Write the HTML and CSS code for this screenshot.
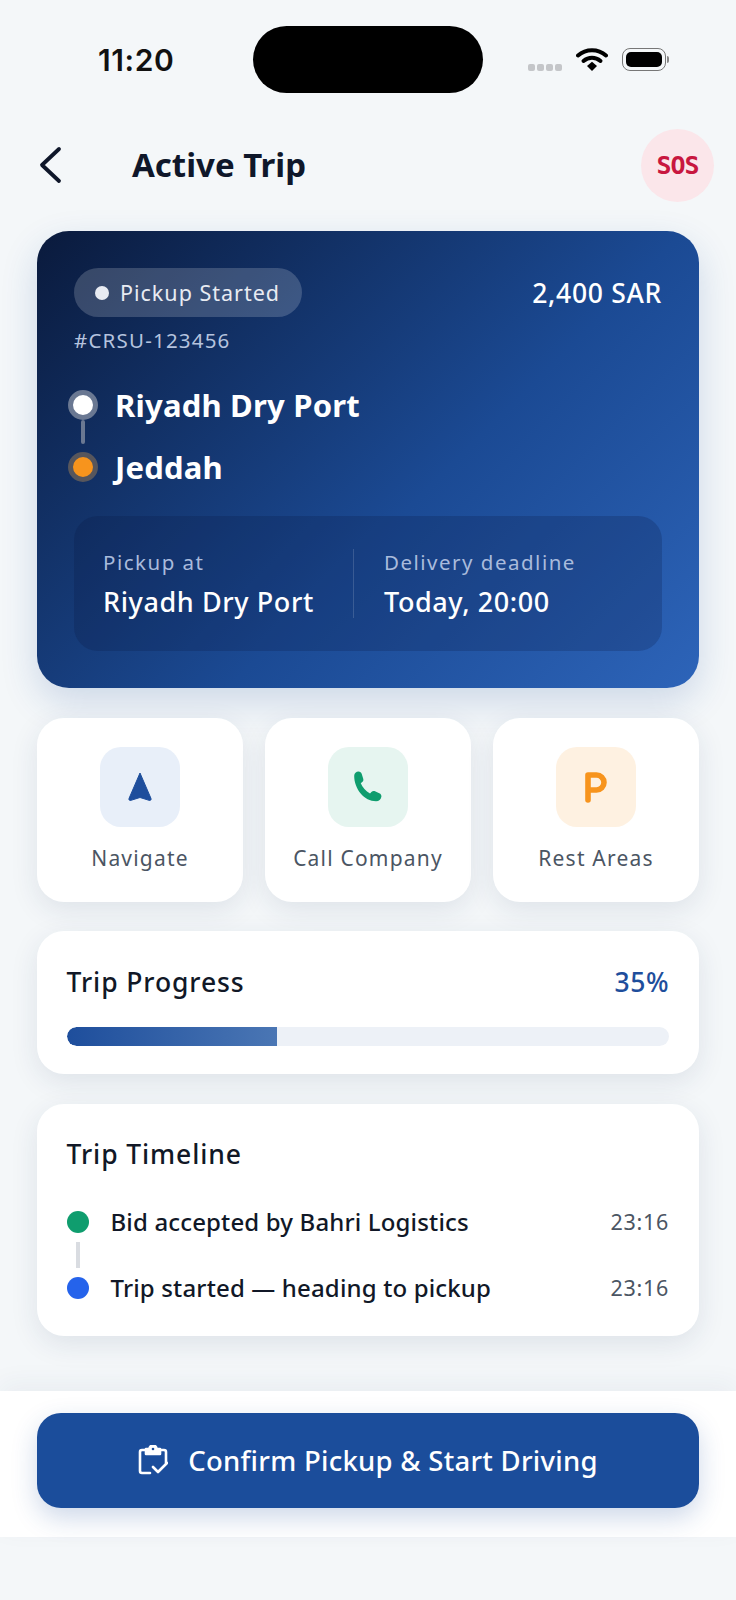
FILE: index.html
```html
<!DOCTYPE html>
<html lang="en">
<head>
    <meta charset="UTF-8">
    <meta name="viewport" content="width=device-width, initial-scale=1.0">
    <title>Active Trip</title>
    <link rel="stylesheet" href="styles.css">
</head>
<body>
    <div class="status-bar">
        <span class="clock">11:20</span>
        <div class="island"></div>
        <div class="status-icons">
            <div class="signal"><i></i><i></i><i></i><i></i></div>
            <svg class="wifi" width="32" height="24" viewBox="0 0 32 24">
                <path d="M2 8.500C10 1.500 22 1.500 30 8.500" fill="none" stroke="#000" stroke-width="4" stroke-linecap="round"/>
                <path d="M7.500 14C12.500 9.800 19.500 9.800 24.500 14" fill="none" stroke="#000" stroke-width="4" stroke-linecap="round"/>
                <path d="M11 19l5-4.200 5 4.200-5 5z" fill="#000"/>
            </svg>
            <div class="battery"><div class="battery-fill"></div></div>
            <div class="battery-cap"></div>
        </div>
    </div>

    <div class="header">
        <svg class="back" width="24" height="38" viewBox="0 0 24 38">
            <path d="M21 3L4 19 21 35" fill="none" stroke="#0f172a" stroke-width="3.800" stroke-linecap="round" stroke-linejoin="round"/>
        </svg>
        <h1>Active Trip</h1>
        <div class="sos">SOS</div>
    </div>

    <div class="content">
        <div class="trip-card">
            <div class="trip-top">
                <div class="pill"><span class="pill-dot"></span>Pickup Started</div>
                <div class="price">2,400 SAR</div>
            </div>
            <div class="trip-id">#CRSU-123456</div>
            <div class="route">
                <div class="route-row">
                    <span class="stop stop-from"></span>
                    <span class="route-name">Riyadh Dry Port</span>
                </div>
                <div class="route-line"></div>
                <div class="route-row">
                    <span class="stop stop-to"></span>
                    <span class="route-name">Jeddah</span>
                </div>
            </div>
            <div class="trip-info">
                <div class="info-col">
                    <div class="info-label">Pickup at</div>
                    <div class="info-value">Riyadh Dry Port</div>
                </div>
                <div class="info-col info-col-right">
                    <div class="info-label">Delivery deadline</div>
                    <div class="info-value">Today, 20:00</div>
                </div>
            </div>
        </div>

        <div class="actions">
            <div class="action">
                <div class="action-icon icon-blue">
                    <svg width="26" height="32" viewBox="0 0 26 32">
                        <path d="M13 2L24 27.500c.5 1.400-.7 2.300-2 1.800L13 26.500 4 29.300c-1.300.5-2.500-.4-2-1.800z" fill="#1e4e9c" stroke="#1e4e9c" stroke-width="1" stroke-linejoin="round"/>
                    </svg>
                </div>
                <div class="action-label">Navigate</div>
            </div>
            <div class="action">
                <div class="action-icon icon-green">
                    <svg width="34" height="34" viewBox="0 0 32 32">
                        <path d="M3 5.500C3 3 5 1.500 7 1.500c1.600 0 2.700.8 3.200 2.400l1.300 4.300c.4 1.300 0 2.400-1 3.200l-1.300 1c1.600 4 4.700 7.500 8.700 9.700l1.300-1.300c1-1 2.200-1.200 3.400-.7l4 1.700c1.500.6 2.200 1.800 2 3.300-.3 2.500-2.400 4.400-5 4.400C12.500 29.500 3 18 3 5.500z" fill="#0f9d6e"/>
                    </svg>
                </div>
                <div class="action-label">Call Company</div>
            </div>
            <div class="action">
                <div class="action-icon icon-orange">
                    <svg width="26" height="32" viewBox="0 0 26 32">
                        <path d="M5 29V4h8.500a7.500 7.500 0 0 1 0 15H5" fill="none" stroke="#f7941d" stroke-width="5.600" stroke-linecap="round" stroke-linejoin="round"/>
                    </svg>
                </div>
                <div class="action-label">Rest Areas</div>
            </div>
        </div>

        <div class="card progress-card">
            <div class="progress-head">
                <span class="card-title">Trip Progress</span>
                <span class="progress-value">35%</span>
            </div>
            <div class="progress-track">
                <div class="progress-fill" style="width: 35%"></div>
            </div>
        </div>

        <div class="card timeline-card">
            <div class="card-title">Trip Timeline</div>
            <div class="timeline">
                <div class="event">
                    <span class="event-dot dot-green"></span>
                    <span class="event-text">Bid accepted by Bahri Logistics</span>
                    <span class="event-time">23:16</span>
                </div>
                <div class="event-line"></div>
                <div class="event">
                    <span class="event-dot dot-blue"></span>
                    <span class="event-text">Trip started — heading to pickup</span>
                    <span class="event-time">23:16</span>
                </div>
            </div>
        </div>
    </div>

    <div class="bottom-bar">
        <button class="confirm">
            <svg width="30" height="30" viewBox="0 0 30 30" fill="none" stroke="#fff" stroke-width="2.600" stroke-linecap="round" stroke-linejoin="round">
                <path d="M8 5H4a2 2 0 0 0-2 2v19a2 2 0 0 0 2 2h8"/>
                <path d="M22 5h4a2 2 0 0 1 2 2v11"/>
                <path d="M8 9V4h3.500a3.500 3.500 0 0 1 7 0H22v5z" fill="#fff"/>
                <circle cx="15" cy="4" r="1.300" fill="#1b4d9b" stroke="none"/>
                <path d="M15 22l5 5 9-9"/>
            </svg>
            Confirm Pickup &amp; Start Driving
        </button>
    </div>
</body>
</html>
```

FILE: styles.css
```css
* {
    box-sizing: border-box;
}
body {
    margin: 0;
    width: 736px;
    height: 1600px;
    overflow: hidden;
    background-color: #f4f7f9;
    color: #0f172a;
    font-family: 'Noto Sans', sans-serif;
}
.status-bar {
    height: 119px;
    padding: 26px 65px 0 98px;
    display: flex;
    align-items: flex-start;
}
.clock {
    width: 155px;
    margin-top: 16px;
    font-family: 'Inter', sans-serif;
    font-size: 30px;
    line-height: 36px;
    font-weight: 600;
    letter-spacing: 0.6px;
    color: #111;
}
.island {
    width: 230px;
    height: 67px;
    border-radius: 34px;
    background-color: #000;
}
.status-icons {
    margin-left: 45px;
    margin-top: 21px;
    display: flex;
    align-items: center;
    flex-shrink: 0;
}
.signal {
    display: flex;
    gap: 2px;
    margin-top: 16px;
    margin-right: 14px;
}
.signal i {
    width: 7px;
    height: 7px;
    border-radius: 2px;
    background-color: #c4c6c9;
}
.wifi {
    margin-right: 14px;
}
.battery {
    width: 44px;
    height: 23px;
    padding: 3px;
    border: 1.500px solid #777;
    border-radius: 8px;
}
.battery-fill {
    height: 100%;
    border-radius: 5px;
    background-color: #000;
}
.battery-cap {
    width: 2px;
    height: 7px;
    margin-left: 1px;
    border-radius: 0 2px 2px 0;
    background-color: #888;
}

.header {
    height: 92px;
    padding: 0 22px 0 38px;
    display: flex;
    align-items: center;
}
.back {
    margin-right: 70px;
}
.header h1 {
    flex: 1;
    margin: 0 0 2px;
    font-size: 33px;
    font-weight: 700;
    color: #0f172a;
}
.sos {
    width: 73px;
    height: 73px;
    border-radius: 50%;
    background-color: #fbe6ea;
    color: #c8173f;
    display: flex;
    align-items: center;
    justify-content: center;
    font-family: 'DejaVu Sans Mono', monospace;
    font-size: 25px;
    font-weight: 700;
    letter-spacing: -1px;
}

.content {
    padding: 20px 37px 0;
    display: flex;
    flex-direction: column;
    gap: 29.500px;
}
.trip-card {
    height: 457px;
    padding: 37px 37px 0;
    border-radius: 32px;
    background: linear-gradient(135deg, #0a1a3c 0%, #1b4a94 58%, #2d64b9 100%);
    box-shadow: 0 14px 36px rgba(30, 78, 156, 0.18);
    color: #fff;
}
.trip-top {
    display: flex;
    justify-content: space-between;
    align-items: center;
}
.pill {
    height: 49px;
    width: 228px;
    padding-left: 21px;
    border-radius: 25px;
    background-color: rgba(255, 255, 255, 0.18);
    display: flex;
    align-items: center;
    gap: 11px;
    font-size: 21.500px;
    letter-spacing: 1px;
    color: #e8ebf2;
}
.pill-dot {
    width: 14px;
    height: 14px;
    border-radius: 50%;
    background-color: #e8ebf2;
}
.price {
    font-size: 26.500px;
    font-weight: 500;
    letter-spacing: 0.7px;
}
.trip-id {
    margin-top: 9px;
    font-size: 20.500px;
    letter-spacing: 1.200px;
    line-height: 28px;
    color: #b5c3de;
}
.route {
    margin-top: 31px;
    margin-left: -6px;
}
.route-row {
    display: flex;
    align-items: center;
    height: 40px;
}
.stop {
    width: 30px;
    height: 30px;
    border-radius: 50%;
    border: 5px solid;
    margin-right: 17px;
    flex-shrink: 0;
}
.stop-from {
    background-color: #fff;
    border-color: #6a7892;
}
.stop-to {
    background-color: #f7941d;
    border-color: #57565c;
}
.route-line {
    width: 4px;
    height: 24px;
    margin: -5px 0 3px 13px;
    border-radius: 2px;
    background-color: #6a7892;
}
.route-name {
    font-size: 31px;
    font-weight: 700;
    letter-spacing: 0.2px;
}
.trip-info {
    height: 135px;
    margin-top: 29px;
    padding: 0 30px 0 29px;
    border-radius: 24px;
    background-color: rgba(8, 24, 62, 0.22);
    display: flex;
    align-items: center;
}
.info-col {
    width: 250px;
    height: 69px;
    display: flex;
    flex-direction: column;
    justify-content: center;
}
.info-col-right {
    width: auto;
    padding-left: 30px;
    border-left: 1.500px solid rgba(255, 255, 255, 0.15);
}
.info-label {
    font-size: 20.500px;
    letter-spacing: 1.500px;
    line-height: 28px;
    color: #a9bbdc;
}
.info-value {
    margin-top: 8px;
    font-size: 27px;
    font-weight: 500;
    letter-spacing: 0.6px;
    line-height: 36px;
    white-space: nowrap;
}

.actions {
    display: grid;
    grid-template-columns: repeat(3, 1fr);
    gap: 22px;
}
.action {
    height: 184px;
    padding-top: 29px;
    border-radius: 27px;
    background-color: #fff;
    box-shadow: 0 8px 28px rgba(30, 50, 90, 0.1);
    display: flex;
    flex-direction: column;
    align-items: center;
}
.action-icon {
    width: 80px;
    height: 80px;
    border-radius: 21px;
    display: flex;
    align-items: center;
    justify-content: center;
}
.icon-blue {
    background-color: #e8eff9;
}
.icon-green {
    background-color: #e6f5f0;
}
.icon-orange {
    background-color: #fef1e1;
}
.action-label {
    margin-top: 16px;
    font-size: 21px;
    letter-spacing: 1.200px;
    line-height: 30px;
    color: #4b5563;
}

.card {
    padding: 0 30px 0 29.500px;
    border-radius: 27px;
    background-color: #fff;
    box-shadow: 0 8px 28px rgba(30, 50, 90, 0.1);
}
.progress-card {
    height: 143px;
    padding-top: 32px;
}
.progress-head {
    display: flex;
    justify-content: space-between;
    align-items: center;
    height: 38px;
}
.card-title {
    font-size: 26.500px;
    font-weight: 500;
    letter-spacing: 0.9px;
    line-height: 38px;
    color: #111827;
}
.progress-value {
    font-size: 26.500px;
    font-weight: 500;
    letter-spacing: 0.5px;
    color: #1e4e9c;
}
.progress-track {
    height: 19px;
    margin-top: 26px;
    border-radius: 10px;
    background-color: #edf1f7;
    overflow: hidden;
}
.progress-fill {
    height: 100%;
    background: linear-gradient(90deg, #1e4e9c, #4a76b4);
    border-radius: 10px 0 0 10px;
}
.timeline-card {
    height: 232px;
    padding-top: 31px;
}
.timeline {
    margin-top: 29px;
}
.event {
    display: flex;
    align-items: center;
    height: 40px;
}
.event-dot {
    width: 22px;
    height: 22px;
    border-radius: 50%;
    margin-right: 22px;
    flex-shrink: 0;
}
.dot-green {
    background-color: #0f9d6e;
}
.dot-blue {
    background-color: #2563eb;
}
.event-line {
    width: 4px;
    height: 26px;
    margin: 0 0 0 9px;
    background-color: #d9dce1;
}
.event-text {
    flex: 1;
    font-size: 24px;
    font-weight: 500;
    letter-spacing: 0.15px;
    color: #111827;
}
.event-time {
    font-size: 21.500px;
    letter-spacing: 0.7px;
    color: #4b5563;
}

.bottom-bar {
    height: 146px;
    margin-top: 55px;
    padding: 22px 37px 0;
    background-color: #fff;
    box-shadow: 0 -8px 24px rgba(30, 50, 90, 0.05);
}
.confirm {
    width: 100%;
    height: 95px;
    border: none;
    border-radius: 24px;
    background-color: #1b4d9b;
    box-shadow: 0 10px 26px rgba(30, 78, 156, 0.22);
    color: #fff;
    display: flex;
    align-items: center;
    justify-content: center;
    gap: 20px;
    font-family: 'Noto Sans', sans-serif;
    font-size: 27.500px;
    font-weight: 500;
    letter-spacing: 0.27px;
}
```
